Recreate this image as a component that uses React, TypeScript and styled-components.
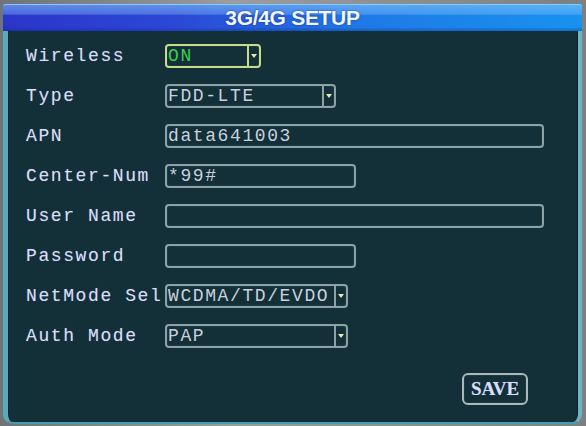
import React from 'react';
import styled, { createGlobalStyle } from 'styled-components';

const GlobalStyle = createGlobalStyle`
  html, body {
    margin: 0;
    padding: 0;
    background: #1b2a30;
  }
`;

const Screen = styled.div`
  width: 586px;
  height: 426px;
  display: flex;
  flex-direction: column;
  background: linear-gradient(to right, #6f7478, #9a9c9e 40%, #7c8084);
  overflow: hidden;
`;

const Panel = styled.div`
  margin: 4px 4px 2px 3px;
  flex: 1;
  display: flex;
  flex-direction: column;
  background: #132f38;
  border-left: 5px solid #5aaabb;
  border-right: 4px solid #6fb4c4;
  border-bottom: 2px solid #3f9fb4;
  border-radius: 3px 3px 10px 10px;
  box-shadow: inset 1px 0 0 #0c2128, inset -1px 0 0 #0c2128;
`;

const Header = styled.div`
  height: 26px;
  margin: 0 -4px 0 -5px;
  display: flex;
  align-items: center;
  justify-content: center;
  border-top: 1px solid #7ed0f0;
  border-radius: 3px 3px 0 0;
  background:
    linear-gradient(to bottom, rgba(140, 200, 255, 0.55) 0%, rgba(140, 200, 255, 0.35) 35%, rgba(0, 0, 0, 0) 40%, rgba(0, 0, 0, 0) 85%, rgba(0, 40, 120, 0.35) 100%),
    linear-gradient(to right, #2b35c9 0%, #2c48d6 30%, #1f78e6 60%, #1892ee 100%);
`;

const Title = styled.span`
  color: #f2f6ff;
  font-family: 'Liberation Sans', Arial, sans-serif;
  font-weight: bold;
  font-size: 21px;
  letter-spacing: -0.3px;
  text-shadow: 0 0 2px rgba(20, 30, 120, 0.8);
`;

const Form = styled.div`
  display: grid;
  grid-template-columns: 139px 1fr;
  grid-auto-rows: 40px;
  padding: 5px 0 0 18px;
  align-items: center;
`;

const Label = styled.div`
  font-family: 'Liberation Mono', 'Courier New', monospace;
  font-size: 18px;
  letter-spacing: 1.6px;
  color: #d9dfe8;
  white-space: nowrap;
  text-shadow: 0 0 1px #4a5aa8;
`;

const Field = styled.div<{ $w: number; $focus?: boolean }>`
  width: ${p => p.$w}px;
  height: 24px;
  box-sizing: border-box;
  display: flex;
  align-items: center;
  border: 2px solid ${p => (p.$focus ? '#c6dc86' : '#8ba3a6')};
  border-radius: 4px;
  box-shadow: inset 0 0 0 1px #1d3a44;
  overflow: hidden;
`;

const Value = styled.span<{ $focus?: boolean }>`
  flex: 1;
  padding-left: 1px;
  font-family: 'Liberation Mono', 'Courier New', monospace;
  font-size: 18px;
  letter-spacing: 1.6px;
  color: ${p => (p.$focus ? '#3fcc4a' : '#c8d1de')};
  white-space: nowrap;
  overflow: hidden;
`;

const Arrow = styled.div<{ $focus?: boolean }>`
  width: 10px;
  align-self: stretch;
  display: flex;
  align-items: center;
  justify-content: center;
  border-left: 2px solid ${p => (p.$focus ? '#c6dc86' : '#8ba3a6')};
  &::after {
    content: '';
    border-left: 3px solid transparent;
    border-right: 3px solid transparent;
    border-top: 4px solid #e8e8b0;
  }
`;

const Footer = styled.div`
  display: flex;
  justify-content: flex-end;
  padding: 17px 50px 0 0;
`;

const SaveButton = styled.button`
  width: 66px;
  height: 32px;
  background: transparent;
  border: 2px solid #a9b8ba;
  border-radius: 6px;
  box-shadow: inset 0 0 0 1px #1d3a44;
  color: #d8dff0;
  font-family: 'Liberation Serif', 'Times New Roman', serif;
  font-weight: bold;
  font-size: 19px;
  padding: 0;
  text-shadow: 0 0 1px #4a5aa8;
`;

type Row = {
  label: string;
  value: string;
  width: number;
  select?: boolean;
  focus?: boolean;
};

const rows: Row[] = [
  { label: 'Wireless', value: 'ON', width: 96, select: true, focus: true },
  { label: 'Type', value: 'FDD-LTE', width: 171, select: true },
  { label: 'APN', value: 'data641003', width: 379 },
  { label: 'Center-Num', value: '*99#', width: 191 },
  { label: 'User Name', value: '', width: 379 },
  { label: 'Password', value: '', width: 191 },
  { label: 'NetMode Sel', value: 'WCDMA/TD/EVDO', width: 183, select: true },
  { label: 'Auth Mode', value: 'PAP', width: 183, select: true },
];

const App: React.FC = () => {
  return (
    <>
      <GlobalStyle />
      <Screen>
        <Panel>
          <Header>
            <Title>3G/4G SETUP</Title>
          </Header>
          <Form>
            {rows.map(row => (
              <React.Fragment key={row.label}>
                <Label>{row.label}</Label>
                <Field $w={row.width} $focus={row.focus}>
                  <Value $focus={row.focus}>{row.value}</Value>
                  {row.select && <Arrow $focus={row.focus} />}
                </Field>
              </React.Fragment>
            ))}
          </Form>
          <Footer>
            <SaveButton>SAVE</SaveButton>
          </Footer>
        </Panel>
      </Screen>
    </>
  );
};

export default App;
